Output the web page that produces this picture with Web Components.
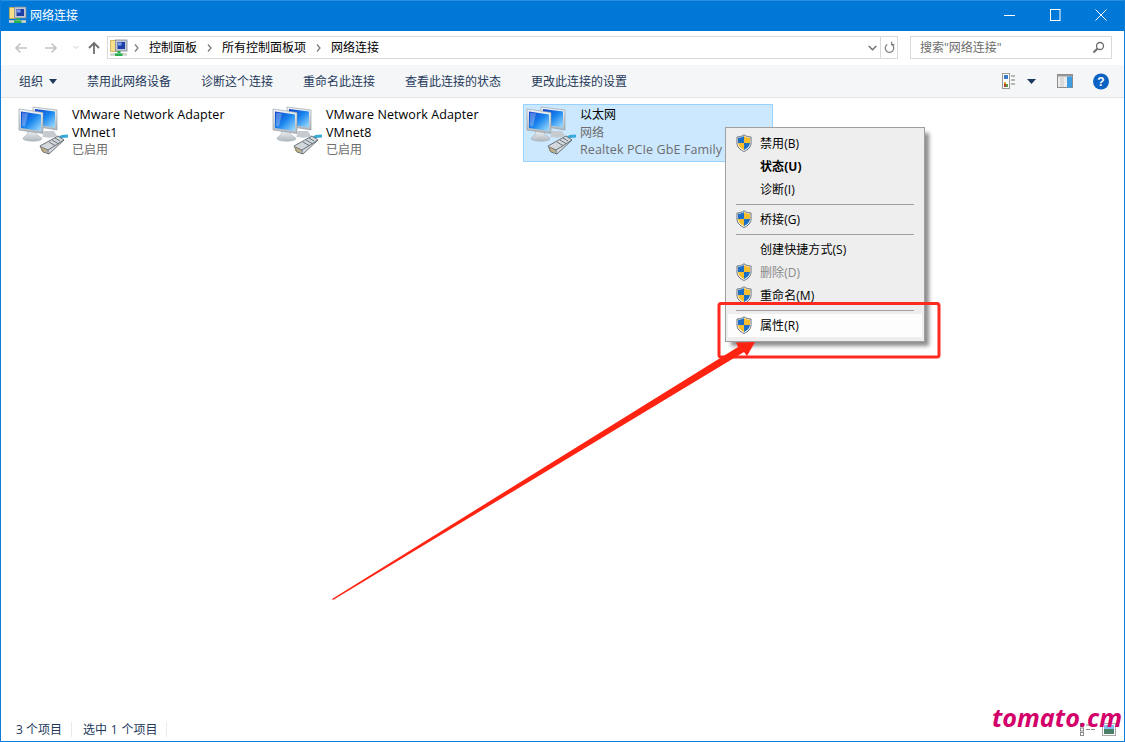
<!DOCTYPE html>
<html lang="zh"><head><meta charset="utf-8"><title>网络连接</title>
<style>
html,body{margin:0;padding:0;height:742px;overflow:hidden;background:#fff}
body{font:12px/17px "Open Sans","Noto Sans CJK SC",sans-serif;color:#000}
</style></head><body>
<x-window>
  <x-titlebar slot="top">网络连接</x-titlebar>
  <x-addressbar slot="top"></x-addressbar>
  <x-commandbar slot="top"></x-commandbar>
  <x-tile name="VMware Network Adapter" l2="VMnet1" l3="已启用"></x-tile>
  <x-tile name="VMware Network Adapter" l2="VMnet8" l3="已启用"></x-tile>
  <x-tile selected name="以太网" l2="网络" l3="Realtek PCIe GbE Family"></x-tile>
  <x-statusbar slot="bottom"></x-statusbar>
</x-window>
<x-menu>
  <x-item shield>禁用(B)</x-item>
  <x-item bold>状态(U)</x-item>
  <x-item>诊断(I)</x-item>
  <x-sep></x-sep>
  <x-item shield>桥接(G)</x-item>
  <x-sep></x-sep>
  <x-item>创建快捷方式(S)</x-item>
  <x-item shield disabled>删除(D)</x-item>
  <x-item shield>重命名(M)</x-item>
  <x-sep></x-sep>
  <x-item shield hot>属性(R)</x-item>
</x-menu>
<x-annotation></x-annotation>
<x-watermark>tomato.cm</x-watermark>
<script>
const FOLDER=`<svg width="18" height="18" viewBox="0 0 18 18"><path d="M.5 1.500h7v11h-7z" fill="#f7e08a" stroke="#c9a94a" stroke-width=".8"/><rect x="5.500" y="1" width="11.500" height="11" fill="#c3cad6" stroke="#7d8899" stroke-width=".8"/><rect x="7.500" y="3" width="7.500" height="7" fill="#1c3fa8"/><rect x="8" y="3.500" width="3.500" height="3" fill="#7fa0ee"/><rect x="7.500" y="12" width="3" height="3" fill="#27b04f"/><rect x="0" y="14.200" width="17" height="2.600" fill="#cfd6cd"/><rect x="5" y="14.500" width="7.500" height="2.500" fill="#27b04f"/></svg>`;
function def(name,css,html){
  customElements.define(name,class extends HTMLElement{
    constructor(){super();this.attachShadow({mode:'open'});}
    connectedCallback(){this.shadowRoot.innerHTML=`<style>${css}</style>`+(typeof html==='function'?html(this):html);}
  });
}
def('x-window',`:host{display:flex;flex-direction:column;box-sizing:border-box;width:1125px;height:742px;border:1px solid #0f7cd8;border-top:0;background:#fff}
.body{flex:1;display:grid;grid-template-columns:repeat(3,254px);grid-auto-rows:58px;align-content:start;padding:6px 0 0 14px}`,
`<slot name="top"></slot><div class="body"><slot></slot></div><slot name="bottom"></slot>`);

def('x-titlebar',`:host{display:flex;align-items:center;height:31px;background:#0078d7;color:#fff;padding:0 0 2px 8px;box-sizing:border-box;border-top:1px solid #2a8fe0;font-size:12px}
.ic{width:18px;height:18px;margin-right:3px;flex:none}
.t{flex:1}
.c{display:flex;height:28px}
.b{width:46px;display:flex;align-items:center;justify-content:center}`,
`<span class="ic">${FOLDER}</span><span class="t"><slot></slot></span>
<span class="c">
<span class="b"><svg width="12" height="12"><path d="M1 6.500h11" stroke="#fff"/></svg></span>
<span class="b"><svg width="12" height="12"><rect x="1.500" y=".5" width="9.500" height="11" fill="none" stroke="#fff"/></svg></span>
<span class="b"><svg width="12" height="12"><path d="M.5.5l11 11M11.500 .5l-11 11" stroke="#fff" fill="none"/></svg></span>
</span>`);

def('x-addressbar',`:host{display:flex;align-items:center;height:34px;background:#fff;box-sizing:border-box;padding:0 12px 1px 0;font-size:12px;color:#000}
.nav{width:106px;display:flex;align-items:center;flex:none;height:100%}
.nav svg{flex:none}
.box{display:flex;align-items:center;width:791px;height:23px;box-sizing:border-box;border:1px solid #d9d9d9;flex:none}
.ic{margin:0 0 0 2px;width:18px;height:18px}
.cr{display:flex;align-items:center}
.cr svg{margin:0 10px}
.sp{flex:1}
.drop{width:15px;display:flex;justify-content:center}
.ref{width:16px;height:100%;border-left:1px solid #d9d9d9;display:flex;align-items:center;justify-content:center}
.search{margin-left:12px;flex:1;height:23px;box-sizing:border-box;border:1px solid #d9d9d9;display:flex;align-items:center;padding:0 6px 0 9px;color:#6d6d6d}
.search span{flex:1}`,
`<div class="nav">
<svg style="margin-left:13px" width="14" height="12"><path d="M13 6H2M6.500 1.500L2 6l4.500 4.500" fill="none" stroke="#c4c4c4" stroke-width="1.600"/></svg>
<svg style="margin-left:16px" width="14" height="12"><path d="M1 6h11M7.500 1.500L12 6l-4.500 4.500" fill="none" stroke="#c4c4c4" stroke-width="1.600"/></svg>
<svg style="margin-left:15px" width="6" height="5"><path d="M.5 1L3 3.500 5.500 1" fill="none" stroke="#c4c4c4"/></svg>
<svg style="margin-left:8px" width="14" height="14"><path d="M7 13V2M2 7l5-5 5 5" fill="none" stroke="#6e6e6e" stroke-width="1.800"/></svg>
</div>
<div class="box"><span class="ic">${FOLDER}</span>
<span class="cr"><svg width="5" height="8" style="margin-left:6px"><path d="M1 .5L4 4 1 7.500" fill="none" stroke="#777" stroke-width="1.200"/></svg>控制面板</span>
<span class="cr"><svg width="5" height="8"><path d="M1 .5L4 4 1 7.500" fill="none" stroke="#777" stroke-width="1.200"/></svg>所有控制面板项</span>
<span class="cr"><svg width="5" height="8"><path d="M1 .5L4 4 1 7.500" fill="none" stroke="#777" stroke-width="1.200"/></svg>网络连接</span>
<span class="sp"></span>
<span class="drop"><svg width="9" height="6"><path d="M.7 1L4.500 4.800 8.300 1" fill="none" stroke="#6e6e6e" stroke-width="1.400"/></svg></span>
<span class="ref"><svg width="11" height="13" viewBox="0 0 11 13"><path d="M3.300 3.400a4.300 4.300 0 1 0 4.400 0M7.700 .8v2.800h2.800" fill="none" stroke="#7a7a7a" stroke-width="1.200"/></svg></span>
</div>
<div class="search"><span>搜索"网络连接"</span><svg width="13" height="13" viewBox="0 0 13 13"><circle cx="8" cy="5" r="3.500" fill="none" stroke="#6e6e6e" stroke-width="1.300"/><path d="M5.500 7.500L1.500 11.500" stroke="#6e6e6e" stroke-width="2"/></svg></div>`);

def('x-commandbar',`:host{display:flex;align-items:center;height:33px;background:#f5f6f7;border-bottom:1px solid #e5e5e5;box-sizing:border-box;padding-left:18px;color:#1e395b;font-size:12px}
span.i{margin-right:30px;white-space:nowrap}
.org{display:flex;align-items:center;margin-right:30px}
.org svg{margin-left:6px}
.right{margin-left:auto;display:flex;align-items:center;padding-right:15px}`,
`<span class="org">组织<svg width="8" height="5"><path d="M0 0h8L4 5z" fill="#1e395b"/></svg></span>
<span class="i">禁用此网络设备</span><span class="i">诊断这个连接</span><span class="i">重命名此连接</span><span class="i">查看此连接的状态</span><span class="i">更改此连接的设置</span>
<span class="right">
<svg width="17" height="17" viewBox="0 0 17 17"><rect x="1.500" y=".5" width="7" height="15" fill="#fff" stroke="#9a9a9a"/><rect x="3" y="2" width="4" height="4" fill="#3a7ac8"/><rect x="3" y="9" width="2" height="2" fill="#d8a030"/><rect x="5" y="11" width="2" height="3" fill="#5a9a40"/><rect x="3" y="11" width="2" height="3" fill="#b04030"/><path d="M10 3h4M10 7h4M10 11h4" stroke="#777"/></svg>
<svg style="margin-left:9px" width="9" height="5"><path d="M0 0h9L4.500 5z" fill="#1e395b"/></svg>
<svg style="margin-left:21px" width="16" height="14" viewBox="0 0 16 14"><rect x=".5" y=".5" width="15" height="13" fill="#ececec" stroke="#8e8e8e"/><rect x="1" y="1" width="14" height="1.500" fill="#9a9a9a"/><rect x="10" y="2.500" width="5" height="11" fill="#3d9ee5"/><path d="M4 2v11M6 2v11" stroke="#c9c9c9"/></svg>
<svg style="margin-left:20px" width="16" height="17" viewBox="0 0 16 17"><circle cx="8" cy="8.500" r="8" fill="#0a62c2"/><text x="8" y="13" text-anchor="middle" font-family="Liberation Sans" font-weight="700" font-size="12" fill="#fff">?</text></svg>
</span>`);

const NET=`<svg width="50" height="50" viewBox="0 0 50 50">
<defs><linearGradient id="s" x1="0" y1="0" x2="1" y2="1"><stop offset="0" stop-color="#0a3ccc"/><stop offset=".5" stop-color="#1a86ee"/><stop offset="1" stop-color="#a5e0ff"/></linearGradient>
<linearGradient id="f" x1="0" y1="0" x2="0" y2="1"><stop offset="0" stop-color="#f4f6f8"/><stop offset="1" stop-color="#aeb6bd"/></linearGradient></defs>
<path d="M26 26l-1 4c-1 1-1 2 0 2 4 1 11 1 14-1l-3-5z" fill="#c5cbcf"/>
<path d="M15 2l24 3v20l-24-4z" fill="url(#f)" stroke="#8e989f" stroke-width=".6"/>
<path d="M17 4l20 2.600v16l-20-3z" fill="url(#s)"/>
<path d="M10 25l-1 5c-3 1-4 3-4 4 3 3 17 3 19 0 0-1-2-3-5-4l-1-5z" fill="url(#f)" stroke="#a4acb2" stroke-width=".5"/>
<path d="M1 4l24 3.500v21L1 25z" fill="url(#f)" stroke="#8e989f" stroke-width=".6"/>
<path d="M3 6.500l20 3v16.500L3 23z" fill="url(#s)"/>
<path d="M4 7.500l6 1-3 13-3-.5z" fill="#fff" opacity=".28"/>
<path d="M40 34l4-2.500 6-.5" fill="none" stroke="#38a9d8" stroke-width="3"/>
<path d="M22 41L40 31l6 4-15 14-6-2z" fill="#d3d8dc" stroke="#5f686f" stroke-width=".9"/>
<path d="M23 42l7 3 16-10M30 45v4M31 37l6 3.500M34 35l6 3.500M37 33l5 3" fill="none" stroke="#5f686f" stroke-width=".9"/>
<path d="M24 42.500v3.500M26 43.500v3.500M28 44.500v3" stroke="#a8893a" stroke-width="1"/>
</svg>`;
def('x-tile',`:host{display:flex;box-sizing:border-box;height:58px;width:250px;border:1px solid transparent;font-size:12px;line-height:17.500px}
:host([selected]){background:#cce8ff;border-color:#99d1ff}
.ic{flex:none;width:50px;height:50px;margin-left:2px}
.t{white-space:nowrap;padding-top:1px;margin-left:4px}
.g{color:#6d6d6d}
.lat{font-size:12.500px;letter-spacing:.1px}`,
t=>{const sel=t.hasAttribute('selected');const c=(v,g)=>`<div class="${g?'g ':''}${/[A-Za-z]/.test(v)?'lat':''}">${v}</div>`;
return `<div class="ic">${NET}</div><div class="t">${c(t.getAttribute('name')||'',false)}${c(t.getAttribute('l2')||'',sel)}${c(t.getAttribute('l3')||'',true)}</div>`;});

def('x-statusbar',`:host{display:flex;align-items:center;height:23px;box-sizing:border-box;padding-left:15px;color:#1e395b;font-size:12px;flex:none}
.s{width:1px;height:15px;background:#eaeaea;margin:0 10px 0 9px}
.a{margin-right:11px}
.w{word-spacing:.7px}
.r{margin-left:auto;display:flex;align-items:center;padding-right:8px;gap:6px}`,
`<span>3 个项目</span><span class="s a"></span><span class="w">选中 1 个项目</span><span class="s"></span>
<span class="r"><svg width="16" height="13"><rect x=".5" y=".5" width="3" height="3" fill="none" stroke="#8a8a8a"/><rect x=".5" y="5" width="3" height="3" fill="none" stroke="#8a8a8a"/><rect x=".5" y="9.500" width="3" height="3" fill="none" stroke="#8a8a8a"/><path d="M6 2h4M11 2h4M6 6.500h4M11 6.500h4" stroke="#8a8a8a"/></svg>
<svg width="14" height="13"><rect x=".5" y=".5" width="13" height="12" fill="#fff" stroke="#a8a8a8"/><rect x="2" y="2" width="10" height="4" fill="#7fc0ee"/><rect x="2" y="6" width="10" height="5" fill="#4b7f6a"/></svg></span>`);

const SHIELD=`<svg width="16" height="18" viewBox="0 0 16 18"><path d="M8 .8C6 2.300 3.500 3 1 3v6c0 4 3 6.800 7 8.400 4-1.600 7-4.400 7-8.400V3C12.500 3 10 2.300 8 .8z" fill="#fff" stroke="#555e68" stroke-width=".9"/><path d="M8 2v7H2V3.800C4 3.800 6.300 3.200 8 2z" fill="#1c6fc4"/><path d="M8 2c1.700 1.200 4 1.800 6 1.800V9H8z" fill="#f6be2c"/><path d="M2 9h6v7C4.800 14.700 2.200 12.400 2 9z" fill="#f6be2c"/><path d="M8 9h6c-.2 3.400-2.800 5.700-6 7z" fill="#1c6fc4"/></svg>`;
def('x-menu',`:host{position:absolute;left:725px;top:127px;width:200px;height:215px;box-sizing:border-box;background:#eee;border:1px solid #a0a0a0;padding:4px 2px;box-shadow:5px 5px 4px -1px rgba(0,0,0,.45);color:#000;font-size:12px;display:block}`,`<slot></slot>`);
def('x-item',`:host{display:flex;align-items:center;height:23px;position:relative;padding-left:32px;white-space:nowrap;letter-spacing:.08px}
:host([bold]){font-weight:700}
:host([disabled]){color:#8a8a8a}
:host([hot]){background:#fdfdfd}
.s{position:absolute;left:8px;top:2px;width:16px;height:18px}`,
t=>(t.hasAttribute('shield')?`<span class="s">${SHIELD}</span>`:'')+`<slot></slot>`);
def('x-sep',`:host{display:block;height:7px;box-sizing:border-box;padding:3px 8px}
div{height:1px;background:#a0a0a0}`,`<div></div>`);
def('x-annotation',`:host{position:absolute;left:0;top:0;width:1125px;height:742px;pointer-events:none;display:block}
svg{display:block}`,`<svg width="1125" height="742"><rect x="719" y="303.500" width="220" height="53.500" rx="2" fill="none" stroke="#ff2a1f" stroke-width="3"/><path d="M332 599L738 347 736 342.500 755 342 747 356 744 352 333 600z" fill="#ff2412"/></svg>`);
def('x-watermark',`:host{position:absolute;left:992px;top:702px;font:italic 700 25.200px/30px "Open Sans",sans-serif;color:#d4006a;display:block;white-space:nowrap}`,`<slot></slot>`);
</script>
</body></html>
